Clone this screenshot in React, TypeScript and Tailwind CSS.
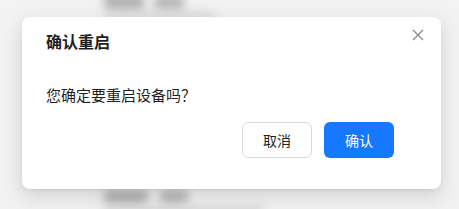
export default function App() {
  return (
    <div
      className="relative h-[209px] w-[459px] overflow-hidden bg-[#f3f3f4]"
      style={{ fontFamily: '"Noto Sans CJK SC", "Noto Sans", sans-serif' }}
    >
      {/* page content behind the dialog, blurred */}
      <div className="flex h-full flex-col justify-between px-[104px] blur-[5px]">
        <div className="-mt-[4px] flex flex-col gap-[4px]">
          <div className="flex gap-[10px]">
            <div className="h-[12px] w-[40px] rounded bg-[#a8a8a8]" />
            <div className="h-[12px] w-[30px] rounded bg-[#b0b0b0]" />
          </div>
          <div className="h-[6px] w-[110px] rounded bg-[#d4d4d4]" />
        </div>
        <div className="-mb-[6px] flex flex-col gap-[5px]">
          <div className="flex gap-[12px]">
            <div className="h-[11px] w-[44px] rounded bg-[#a8a8a8]" />
            <div className="h-[11px] w-[28px] rounded bg-[#b0b0b0]" />
          </div>
          <div className="h-[8px] w-[160px] rounded bg-[#d4d4d4]" />
        </div>
      </div>

      <div className="absolute left-[22px] top-[17px] flex h-[172px] w-[419px] flex-col rounded-[8px] bg-white pl-[24px] pr-[47px] shadow-[0_6px_16px_0_rgba(0,0,0,0.08),0_3px_6px_-4px_rgba(0,0,0,0.12),0_9px_28px_8px_rgba(0,0,0,0.05)]">
        <button className="absolute right-[12px] top-[7px] flex h-[22px] w-[22px] items-center justify-center text-[#8c8c8c]">
          <svg width="12" height="12" viewBox="0 0 12 12" fill="none" stroke="currentColor" strokeWidth="1.4">
            <path d="M1 1L11 11M11 1L1 11" />
          </svg>
        </button>
        <div className="mt-[12px] text-[16px] font-bold leading-[24px] text-[#1f1f1f]">确认重启</div>
        <div className="mt-[30px] text-[15px] leading-[24px] text-[#1f1f1f]">您确定要重启设备吗？</div>
        <div className="mt-[15px] flex justify-end gap-[12px]">
          <button className="h-[36px] w-[70px] rounded-[6px] border border-[#d9d9d9] bg-white text-[14px] text-[#1f1f1f]">
            取消
          </button>
          <button className="h-[36px] w-[70px] rounded-[6px] bg-[#1677ff] text-[14px] text-white">
            确认
          </button>
        </div>
      </div>
    </div>
  );
}
